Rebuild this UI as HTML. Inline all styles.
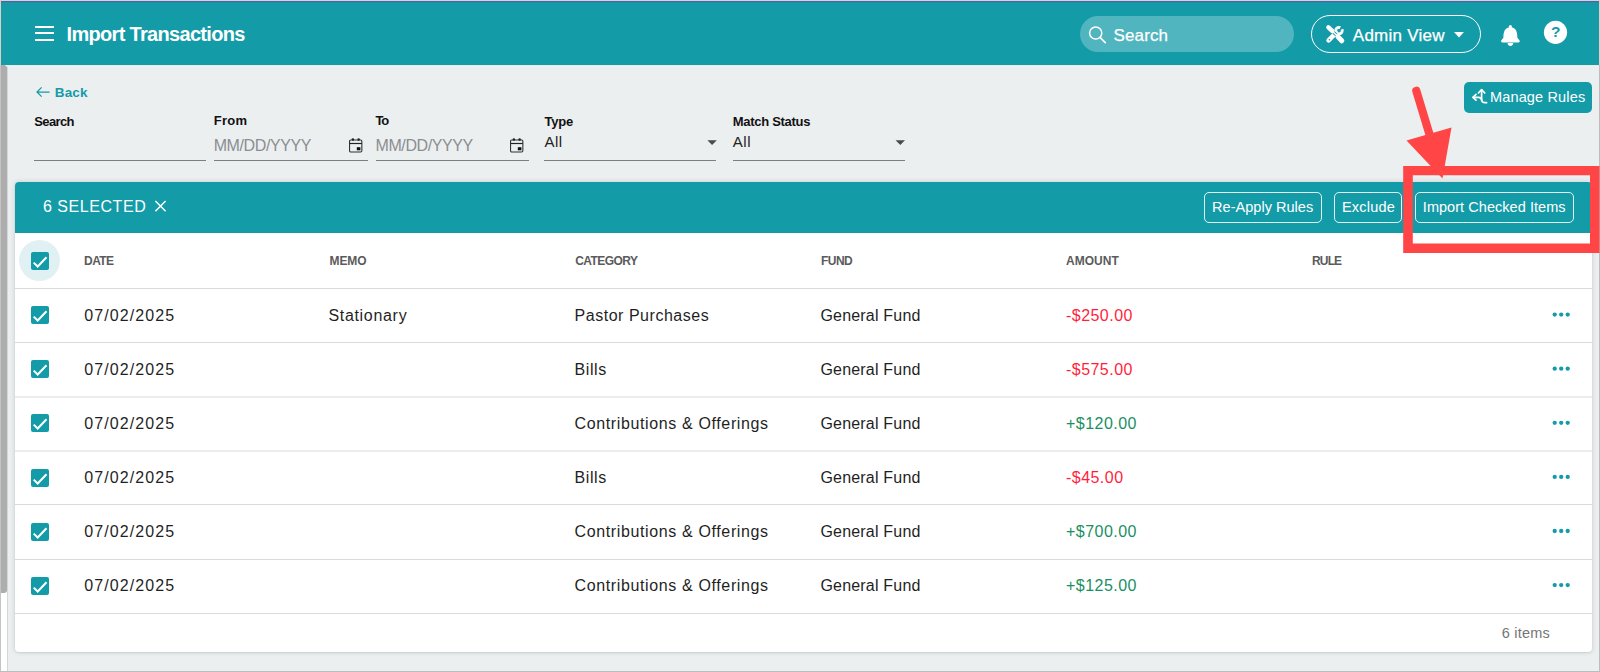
<!DOCTYPE html>
<html><head><meta charset="utf-8">
<style>
*{box-sizing:border-box;margin:0;padding:0}
html,body{width:1600px;height:672px;overflow:hidden;background:#eceff0;font-family:"Liberation Sans",sans-serif}
.a{position:absolute;white-space:nowrap;line-height:1}
.b{position:absolute}
svg{position:absolute;overflow:visible}
</style></head><body>
<div class="b" style="left:0;top:0;width:1600px;height:65px;background:#149ba8"></div>
<div class="b" style="left:0;top:0;width:1600px;height:1px;background:#dcd3cc"></div>
<div class="b" style="left:0;top:0;width:1px;height:65px;background:#dcd0c8"></div>
<div class="b" style="left:1599px;top:0;width:1px;height:65px;background:#dcd0c8"></div>
<div class="b" style="left:1px;top:1px;width:1598px;height:1px;background:#3a6cb0"></div>
<div class="b" style="left:1px;top:2px;width:1598px;height:1px;background:#2a86ad"></div>
<div class="b" style="left:35.2px;top:25.8px;width:18.6px;height:2px;background:#fff"></div>
<div class="b" style="left:35.2px;top:32.2px;width:18.6px;height:2px;background:#fff"></div>
<div class="b" style="left:35.2px;top:38.6px;width:18.6px;height:2px;background:#fff"></div>
<div class="a" style="left:66.50px;top:23.57px;font-size:20px;font-weight:bold;color:#fff;letter-spacing:-0.68px;">Import Transactions</div>
<div class="b" style="left:1080px;top:16px;width:214px;height:36px;border-radius:18px;background:rgba(255,255,255,.26)"></div>
<svg style="left:0;top:0" width="1600" height="672"><circle cx="1095.7" cy="33" r="6.1" fill="none" stroke="#fff" stroke-width="1.5"/><line x1="1100.3" y1="37.6" x2="1105.3" y2="42.6" stroke="#fff" stroke-width="1.7" stroke-linecap="round"/></svg>
<div class="a" style="left:1113.60px;top:26.81px;font-size:17px;font-weight:normal;color:#fff;letter-spacing:0.1px;-webkit-text-stroke:0.25px #fff">Search</div>
<div class="b" style="left:1311px;top:15px;width:170px;height:38px;border-radius:19px;border:1.2px solid #fff"></div>
<svg style="left:1322px;top:22px" width="28" height="24">
<g fill="none" stroke-linecap="round">
<path d="M6.6 18.4 L11.4 13.5" stroke="#fff" stroke-width="4.6"/>
<path d="M11.4 13.5 L14.6 10.6" stroke="#fff" stroke-width="3"/>
<circle cx="17" cy="8.6" r="3.3" stroke="#fff" stroke-width="2.8"/>
</g>
<path d="M17 8.6 L22.5 6.2 L19.8 2.2 Z" fill="#149ba8"/>
<circle cx="7.4" cy="17.8" r="0.8" fill="#149ba8"/>
<g fill="none" stroke-linecap="round">
<path d="M10.6 9.3 L15.2 13.8" stroke="#149ba8" stroke-width="3.2" stroke-linecap="butt"/>
<path d="M6.4 5.3 L10.4 9.2" stroke="#fff" stroke-width="4.4"/>
<path d="M10.4 9.2 L15.2 13.8" stroke="#fff" stroke-width="1.4"/>
<path d="M15.8 14.6 L19.8 18.8" stroke="#fff" stroke-width="5"/>
</g>
</svg>
<div class="a" style="left:1352.80px;top:26.51px;font-size:17px;font-weight:normal;color:#fff;letter-spacing:0.24px;-webkit-text-stroke:0.25px #fff">Admin View</div>
<svg style="left:0;top:0" width="1600" height="672"><path d="M1454 32 H1464 L1459 37.6 Z" fill="#fff"/></svg>
<svg style="left:0;top:0" width="1600" height="672"><g fill="#fff">
<circle cx="1510.4" cy="26.4" r="1.5"/>
<path d="M1503.4 37.8 C1503.4 32.4 1504.4 27.4 1510.4 26.9 C1516.4 27.4 1517.4 32.4 1517.4 37.8 L1519.6 40.6 Q1520.3 42.4 1518.6 42.4 H1502.2 Q1500.5 42.4 1501.2 40.6 Z"/>
<path d="M1507.6 43.1 H1513.2 A2.8 2.8 0 0 1 1507.6 43.1 Z"/>
</g></svg>
<svg style="left:0;top:0" width="1600" height="672"><circle cx="1555.5" cy="32.35" r="11.6" fill="#fff"/></svg>
<div class="a" style="left:1551.00px;top:23.78px;font-size:15.5px;font-weight:bold;color:#149ba8;letter-spacing:0px;">?</div>
<div class="b" style="left:0;top:65px;width:1px;height:607px;background:#c4c4c4"></div>
<div class="b" style="left:1px;top:65px;width:6px;height:607px;background:#fff"></div>
<div class="b" style="left:1px;top:65px;width:6px;height:528px;background:#adadad;border-radius:0 3px 3px 0"></div>
<div class="b" style="left:7px;top:65px;width:1px;height:607px;background:#d3d7d9"></div>
<div class="b" style="left:1599px;top:65px;width:1px;height:607px;background:#bdbdbd"></div>
<div class="b" style="left:0;top:671px;width:1600px;height:1px;background:#bdbdbd"></div>
<div class="b" style="left:7px;top:65px;width:1592px;height:1px;background:#e7e8e8"></div>
<div class="b" style="left:7px;top:66px;width:1592px;height:1px;background:#f1f2f1"></div>
<svg style="left:0;top:0" width="1600" height="672"><path d="M49.6 92 H37.2 M41.6 87.4 L37 92 L41.6 96.6" fill="none" stroke="#149ba8" stroke-width="1.25"/></svg>
<div class="a" style="left:54.80px;top:85.97px;font-size:13.5px;font-weight:bold;color:#149ba8;letter-spacing:0.13px;">Back</div>
<div class="a" style="left:34.20px;top:115.40px;font-size:13px;font-weight:bold;color:#111;letter-spacing:-0.6px;">Search</div>
<div class="b" style="left:34px;top:160px;width:172px;height:1px;background:#7a7f81"></div>
<div class="a" style="left:213.70px;top:113.70px;font-size:13px;font-weight:bold;color:#111;letter-spacing:0.33px;">From</div>
<div class="a" style="left:213.70px;top:138.06px;font-size:16px;font-weight:normal;color:#8b8e90;letter-spacing:-0.4px;">MM/DD/YYYY</div>
<svg style="left:349.4px;top:138px" width="14" height="15" viewBox="0 0 14 15">
<rect x="0.55" y="1.95" width="12.3" height="12.1" rx="1.2" fill="none" stroke="#333" stroke-width="1.1"/>
<line x1="0.6" y1="5.5" x2="12.9" y2="5.5" stroke="#222" stroke-width="1.2"/>
<circle cx="3.9" cy="1.6" r="1.25" fill="#222"/><circle cx="9.6" cy="1.6" r="1.25" fill="#222"/>
<rect x="7.8" y="9.2" width="3.6" height="3.1" fill="#111"/></svg>
<div class="b" style="left:214.0px;top:160px;width:154px;height:1px;background:#7a7f81"></div>
<div class="a" style="left:375.50px;top:113.70px;font-size:13px;font-weight:bold;color:#111;letter-spacing:-1.3px;">To</div>
<div class="a" style="left:375.50px;top:138.06px;font-size:16px;font-weight:normal;color:#8b8e90;letter-spacing:-0.4px;">MM/DD/YYYY</div>
<svg style="left:510.0px;top:138px" width="14" height="15" viewBox="0 0 14 15">
<rect x="0.55" y="1.95" width="12.3" height="12.1" rx="1.2" fill="none" stroke="#333" stroke-width="1.1"/>
<line x1="0.6" y1="5.5" x2="12.9" y2="5.5" stroke="#222" stroke-width="1.2"/>
<circle cx="3.9" cy="1.6" r="1.25" fill="#222"/><circle cx="9.6" cy="1.6" r="1.25" fill="#222"/>
<rect x="7.8" y="9.2" width="3.6" height="3.1" fill="#111"/></svg>
<div class="b" style="left:375.8px;top:160px;width:153px;height:1px;background:#7a7f81"></div>
<div class="a" style="left:544.40px;top:115.40px;font-size:13px;font-weight:bold;color:#111;letter-spacing:-0.17px;">Type</div>
<div class="a" style="left:544.40px;top:133.90px;font-size:15px;font-weight:normal;color:#222;letter-spacing:0.5px;">All</div>
<svg style="left:0;top:0" width="1600" height="672"><path d="M707.4 140.2 H716.8 L712.1 145 Z" fill="#4a4a4a"/></svg>
<div class="b" style="left:544.4px;top:160px;width:172px;height:1px;background:#7a7f81"></div>
<div class="a" style="left:732.80px;top:115.40px;font-size:13px;font-weight:bold;color:#111;letter-spacing:-0.3px;">Match Status</div>
<div class="a" style="left:732.80px;top:133.90px;font-size:15px;font-weight:normal;color:#222;letter-spacing:0.5px;">All</div>
<svg style="left:0;top:0" width="1600" height="672"><path d="M895.6 140.2 H905.0 L900.3000000000001 145 Z" fill="#4a4a4a"/></svg>
<div class="b" style="left:732.8px;top:160px;width:172px;height:1px;background:#7a7f81"></div>
<div class="b" style="left:1464px;top:82px;width:128px;height:31px;border-radius:5px;background:#149ba8"></div>
<svg style="left:0;top:0" width="1600" height="672"><g fill="none" stroke="#fff" stroke-width="1.7" stroke-linecap="round" stroke-linejoin="round"><path d="M1481.6 90.2 V99.2 Q1481.6 102.7 1485.2 102.7 H1486.6"/><path d="M1478.4 93 L1481.6 89.7 L1484.8 93"/><path d="M1473.2 97.3 H1478.4 Q1481.6 97.3 1481.6 100"/><path d="M1476 94.4 L1473 97.3 L1476 100.2"/></g></svg>
<div class="a" style="left:1490.00px;top:89.53px;font-size:14.5px;font-weight:normal;color:#fff;letter-spacing:0.15px;">Manage Rules</div>
<div class="b" style="left:15px;top:182px;width:1577px;height:470px;background:#fff;border-radius:4px;box-shadow:0 0 5px rgba(0,0,0,.15),0 1px 2px rgba(0,0,0,.06)"></div>
<div class="b" style="left:15px;top:182px;width:1577px;height:51px;background:#149ba8;border-radius:4px 4px 0 0"></div>
<div class="a" style="left:42.90px;top:199.46px;font-size:16px;font-weight:normal;color:#fff;letter-spacing:0.56px;">6 SELECTED</div>
<svg style="left:0;top:0" width="1600" height="672"><path d="M155.4 201 L165.6 211.2 M165.6 201 L155.4 211.2" stroke="#fff" stroke-width="1.5"/></svg>
<div class="b" style="left:1204.2px;top:192.2px;width:117.6px;height:30.5px;border:1.3px solid rgba(255,255,255,.88);border-radius:5px"></div>
<div class="a" style="left:1212.10px;top:199.73px;font-size:14.5px;font-weight:normal;color:#fff;letter-spacing:0.03px;">Re-Apply Rules</div>
<div class="b" style="left:1334.1px;top:192.2px;width:67.7px;height:30.5px;border:1.3px solid rgba(255,255,255,.88);border-radius:5px"></div>
<div class="a" style="left:1342.00px;top:199.73px;font-size:14.5px;font-weight:normal;color:#fff;letter-spacing:0.2px;">Exclude</div>
<div class="b" style="left:1414.8px;top:192.2px;width:159.4px;height:30.5px;border:1.3px solid rgba(255,255,255,.88);border-radius:5px"></div>
<div class="a" style="left:1422.80px;top:199.73px;font-size:14.5px;font-weight:normal;color:#fff;letter-spacing:0.05px;">Import Checked Items</div>
<div class="b" style="left:19px;top:239.6px;width:41px;height:41px;border-radius:50%;background:#e1f1f3"></div>
<svg style="left:31px;top:251.90px" width="18" height="18" viewBox="0 0 18 18"><rect width="18" height="18" rx="2" fill="#149ba8"/><path d="M2.7 10.6 L6.7 14.5 L15.5 5.2" fill="none" stroke="#fff" stroke-width="2"/></svg>
<div class="a" style="left:84.10px;top:254.64px;font-size:12px;font-weight:bold;color:#5b5b5b;letter-spacing:-0.6px;">DATE</div>
<div class="a" style="left:329.60px;top:254.64px;font-size:12px;font-weight:bold;color:#5b5b5b;letter-spacing:-0.12px;">MEMO</div>
<div class="a" style="left:575.25px;top:254.64px;font-size:12px;font-weight:bold;color:#5b5b5b;letter-spacing:-0.57px;">CATEGORY</div>
<div class="a" style="left:821.00px;top:254.64px;font-size:12px;font-weight:bold;color:#5b5b5b;letter-spacing:-0.55px;">FUND</div>
<div class="a" style="left:1066.10px;top:254.64px;font-size:12px;font-weight:bold;color:#5b5b5b;letter-spacing:0.0px;">AMOUNT</div>
<div class="a" style="left:1312.00px;top:254.64px;font-size:12px;font-weight:bold;color:#5b5b5b;letter-spacing:-0.85px;">RULE</div>
<div class="b" style="left:15px;top:288px;width:1577px;height:1px;background:#dadada"></div>
<svg style="left:31px;top:306.25px" width="18" height="18" viewBox="0 0 18 18"><rect width="18" height="18" rx="2" fill="#149ba8"/><path d="M2.7 10.6 L6.7 14.5 L15.5 5.2" fill="none" stroke="#fff" stroke-width="2"/></svg>
<div class="a" style="left:84.20px;top:308.26px;font-size:16px;font-weight:normal;color:#1f1f1f;letter-spacing:1.11px;">07/02/2025</div>
<div class="a" style="left:328.40px;top:308.26px;font-size:16px;font-weight:normal;color:#1f1f1f;letter-spacing:0.69px;">Stationary</div>
<div class="a" style="left:574.50px;top:308.26px;font-size:16px;font-weight:normal;color:#1f1f1f;letter-spacing:0.53px;">Pastor Purchases</div>
<div class="a" style="left:820.40px;top:308.26px;font-size:16px;font-weight:normal;color:#1f1f1f;letter-spacing:0.2px;">General Fund</div>
<div class="a" style="left:1066.00px;top:308.26px;font-size:16px;font-weight:normal;color:#ff1f3d;letter-spacing:0.46px;">-$250.00</div>
<svg style="left:0;top:0" width="1600" height="672"><g fill="#149ba8"><circle cx="1554.7" cy="314.60" r="2.15"/><circle cx="1561.2" cy="314.60" r="2.15"/><circle cx="1567.7" cy="314.60" r="2.15"/></g></svg>
<div class="b" style="left:15px;top:342px;width:1577px;height:1px;background:#dadada"></div>
<svg style="left:31px;top:360.35px" width="18" height="18" viewBox="0 0 18 18"><rect width="18" height="18" rx="2" fill="#149ba8"/><path d="M2.7 10.6 L6.7 14.5 L15.5 5.2" fill="none" stroke="#fff" stroke-width="2"/></svg>
<div class="a" style="left:84.20px;top:362.26px;font-size:16px;font-weight:normal;color:#1f1f1f;letter-spacing:1.11px;">07/02/2025</div>
<div class="a" style="left:574.50px;top:362.26px;font-size:16px;font-weight:normal;color:#1f1f1f;letter-spacing:0.6px;">Bills</div>
<div class="a" style="left:820.40px;top:362.26px;font-size:16px;font-weight:normal;color:#1f1f1f;letter-spacing:0.2px;">General Fund</div>
<div class="a" style="left:1066.00px;top:362.26px;font-size:16px;font-weight:normal;color:#ff1f3d;letter-spacing:0.46px;">-$575.00</div>
<svg style="left:0;top:0" width="1600" height="672"><g fill="#149ba8"><circle cx="1554.7" cy="368.70" r="2.15"/><circle cx="1561.2" cy="368.70" r="2.15"/><circle cx="1567.7" cy="368.70" r="2.15"/></g></svg>
<div class="b" style="left:15px;top:396px;width:1577px;height:2px;background:#ececec"></div>
<svg style="left:31px;top:414.45px" width="18" height="18" viewBox="0 0 18 18"><rect width="18" height="18" rx="2" fill="#149ba8"/><path d="M2.7 10.6 L6.7 14.5 L15.5 5.2" fill="none" stroke="#fff" stroke-width="2"/></svg>
<div class="a" style="left:84.20px;top:416.26px;font-size:16px;font-weight:normal;color:#1f1f1f;letter-spacing:1.11px;">07/02/2025</div>
<div class="a" style="left:574.50px;top:416.26px;font-size:16px;font-weight:normal;color:#1f1f1f;letter-spacing:0.63px;">Contributions &amp; Offerings</div>
<div class="a" style="left:820.40px;top:416.26px;font-size:16px;font-weight:normal;color:#1f1f1f;letter-spacing:0.2px;">General Fund</div>
<div class="a" style="left:1066.00px;top:416.26px;font-size:16px;font-weight:normal;color:#1b8f63;letter-spacing:0.46px;">+$120.00</div>
<svg style="left:0;top:0" width="1600" height="672"><g fill="#149ba8"><circle cx="1554.7" cy="422.80" r="2.15"/><circle cx="1561.2" cy="422.80" r="2.15"/><circle cx="1567.7" cy="422.80" r="2.15"/></g></svg>
<div class="b" style="left:15px;top:450px;width:1577px;height:2px;background:#ececec"></div>
<svg style="left:31px;top:468.55px" width="18" height="18" viewBox="0 0 18 18"><rect width="18" height="18" rx="2" fill="#149ba8"/><path d="M2.7 10.6 L6.7 14.5 L15.5 5.2" fill="none" stroke="#fff" stroke-width="2"/></svg>
<div class="a" style="left:84.20px;top:470.26px;font-size:16px;font-weight:normal;color:#1f1f1f;letter-spacing:1.11px;">07/02/2025</div>
<div class="a" style="left:574.50px;top:470.26px;font-size:16px;font-weight:normal;color:#1f1f1f;letter-spacing:0.6px;">Bills</div>
<div class="a" style="left:820.40px;top:470.26px;font-size:16px;font-weight:normal;color:#1f1f1f;letter-spacing:0.2px;">General Fund</div>
<div class="a" style="left:1066.00px;top:470.26px;font-size:16px;font-weight:normal;color:#ff1f3d;letter-spacing:0.46px;">-$45.00</div>
<svg style="left:0;top:0" width="1600" height="672"><g fill="#149ba8"><circle cx="1554.7" cy="476.90" r="2.15"/><circle cx="1561.2" cy="476.90" r="2.15"/><circle cx="1567.7" cy="476.90" r="2.15"/></g></svg>
<div class="b" style="left:15px;top:504px;width:1577px;height:1px;background:#dadada"></div>
<svg style="left:31px;top:522.65px" width="18" height="18" viewBox="0 0 18 18"><rect width="18" height="18" rx="2" fill="#149ba8"/><path d="M2.7 10.6 L6.7 14.5 L15.5 5.2" fill="none" stroke="#fff" stroke-width="2"/></svg>
<div class="a" style="left:84.20px;top:524.26px;font-size:16px;font-weight:normal;color:#1f1f1f;letter-spacing:1.11px;">07/02/2025</div>
<div class="a" style="left:574.50px;top:524.26px;font-size:16px;font-weight:normal;color:#1f1f1f;letter-spacing:0.63px;">Contributions &amp; Offerings</div>
<div class="a" style="left:820.40px;top:524.26px;font-size:16px;font-weight:normal;color:#1f1f1f;letter-spacing:0.2px;">General Fund</div>
<div class="a" style="left:1066.00px;top:524.26px;font-size:16px;font-weight:normal;color:#1b8f63;letter-spacing:0.46px;">+$700.00</div>
<svg style="left:0;top:0" width="1600" height="672"><g fill="#149ba8"><circle cx="1554.7" cy="531.00" r="2.15"/><circle cx="1561.2" cy="531.00" r="2.15"/><circle cx="1567.7" cy="531.00" r="2.15"/></g></svg>
<div class="b" style="left:15px;top:559px;width:1577px;height:1px;background:#dadada"></div>
<svg style="left:31px;top:576.75px" width="18" height="18" viewBox="0 0 18 18"><rect width="18" height="18" rx="2" fill="#149ba8"/><path d="M2.7 10.6 L6.7 14.5 L15.5 5.2" fill="none" stroke="#fff" stroke-width="2"/></svg>
<div class="a" style="left:84.20px;top:578.26px;font-size:16px;font-weight:normal;color:#1f1f1f;letter-spacing:1.11px;">07/02/2025</div>
<div class="a" style="left:574.50px;top:578.26px;font-size:16px;font-weight:normal;color:#1f1f1f;letter-spacing:0.63px;">Contributions &amp; Offerings</div>
<div class="a" style="left:820.40px;top:578.26px;font-size:16px;font-weight:normal;color:#1f1f1f;letter-spacing:0.2px;">General Fund</div>
<div class="a" style="left:1066.00px;top:578.26px;font-size:16px;font-weight:normal;color:#1b8f63;letter-spacing:0.46px;">+$125.00</div>
<svg style="left:0;top:0" width="1600" height="672"><g fill="#149ba8"><circle cx="1554.7" cy="585.10" r="2.15"/><circle cx="1561.2" cy="585.10" r="2.15"/><circle cx="1567.7" cy="585.10" r="2.15"/></g></svg>
<div class="b" style="left:15px;top:613px;width:1577px;height:1px;background:#dadada"></div>
<div class="a" style="left:1501.70px;top:626.03px;font-size:14.5px;font-weight:normal;color:#757575;letter-spacing:0.23px;">6 items</div>
<svg style="left:0;top:0" width="1600" height="672">
<path d="M1403.2 166 H1599.5 V253 H1403.2 Z M1412.8 175.3 V243.6 H1590 V175.3 Z" fill="#ff4545" fill-rule="evenodd"/>
<line x1="1416.3" y1="90.8" x2="1430" y2="136" stroke="#ff4545" stroke-width="8.2" stroke-linecap="round"/>
<path d="M1406.5 140.6 L1451.5 127.5 L1442.5 178.5 Z" fill="#ff4545"/>
</svg>
</body></html>
